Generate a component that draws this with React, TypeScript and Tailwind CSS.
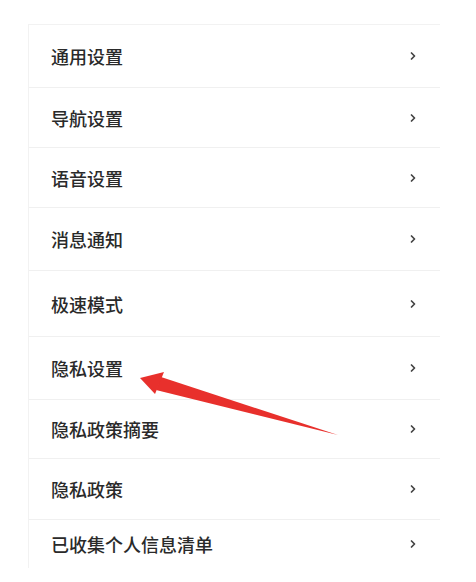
import { ChevronRight } from "lucide-react";

const items = [
  { label: "通用设置", h: 63 },
  { label: "导航设置", h: 60 },
  { label: "语音设置", h: 60 },
  { label: "消息通知", h: 63 },
  { label: "极速模式", h: 66 },
  { label: "隐私设置", h: 63 },
  { label: "隐私政策摘要", h: 59 },
  { label: "隐私政策", h: 61 },
  { label: "已收集个人信息清单", h: 48 },
];

function SettingsRow({ label, h, last }: { label: string; h: number; last: boolean }) {
  return (
    <div
      className={
        "flex items-center justify-between pl-[22px] pr-[21px] " +
        (last ? "" : "border-b border-[#f0f0f0]")
      }
      style={{ height: h }}
    >
      <span className="text-[18px] font-medium leading-none text-[#2a2a2a]">{label}</span>
      <ChevronRight className="h-[12px] w-[12px] text-[#444]" strokeWidth={3.5} />
    </div>
  );
}

export default function App() {
  return (
    <div
      className="relative h-[582px] w-[476px] overflow-hidden bg-white pl-[28px] pt-[24px]"
      style={{ fontFamily: '"Noto Sans CJK SC", "Noto Sans", sans-serif' }}
    >
      <div className="w-[412px] border-l border-t border-[#f2f2f2]">
        {items.map((item, i) => (
          <SettingsRow key={item.label} label={item.label} h={item.h} last={i === items.length - 1} />
        ))}
      </div>

      {/* red annotation arrow */}
      <svg className="pointer-events-none absolute left-0 top-0" width="476" height="582">
        <polygon points="338,435 161,377 156,390" fill="#e8302c" />
        <polygon points="140,378 164,372 155,394" fill="#e8302c" />
      </svg>
    </div>
  );
}
